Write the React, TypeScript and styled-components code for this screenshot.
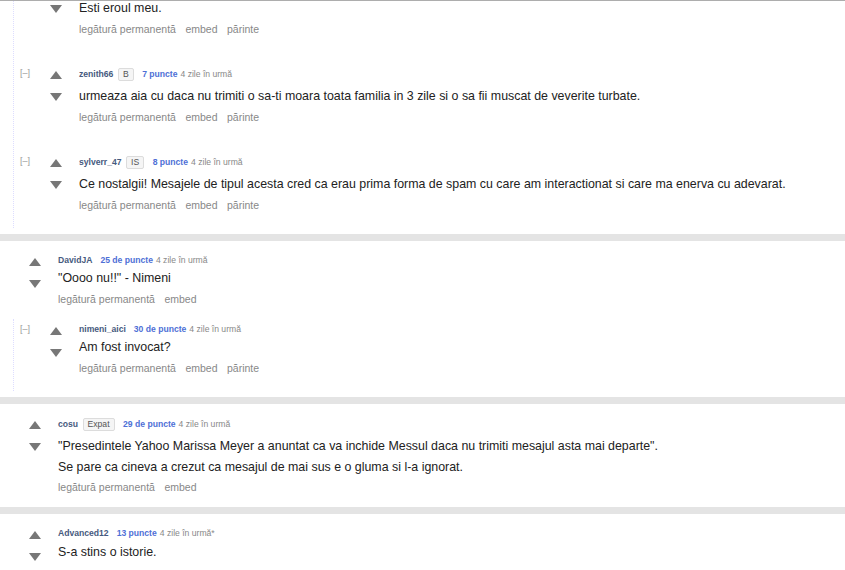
import React from 'react';
import styled, { createGlobalStyle } from 'styled-components';

const GlobalStyle = createGlobalStyle`
  html, body { margin: 0; padding: 0; background: #fff; }
  body { font-family: "Liberation Sans", Arial, sans-serif; }
`;

const Viewport = styled.div`
  width: 845px;
  height: 570px;
  overflow: hidden;
  box-sizing: border-box;
  border-top: 1px solid #adadad;
  background: #fff;
`;

const Thread = styled.div<{ $scroll: number }>`
  display: flex;
  flex-direction: column;
  gap: 7px;
  background: #e4e4e4;
  margin-top: ${(p) => -p.$scroll}px;
`;

const Block = styled.div<{ $continued?: boolean }>`
  background: #fff;
  padding: ${(p) => (p.$continued ? 0 : 14)}px 0 6px;
`;

const Row = styled.div<{ $nested?: boolean }>`
  display: flex;
  align-items: flex-start;
  padding: 0 0 7px ${(p) => (p.$nested ? 6 : 29)}px;
`;

const Collapse = styled.span`
  width: 30px;
  flex: none;
  font-size: 9px;
  line-height: 11px;
  color: #9a9a9a;
`;

const Voting = styled.div`
  width: 12px;
  flex: none;
  display: flex;
  flex-direction: column;
  gap: 14px;
  padding-top: 3px;
  margin-right: 17px;
`;

const ArrowSvg = styled.svg`
  display: block;
  width: 12px;
  height: 8px;
  fill: #777;
`;

const Entry = styled.div`
  flex: 1;
  display: flex;
  flex-direction: column;
  min-width: 0;
`;

const Tagline = styled.div<{ $flair?: boolean }>`
  display: flex;
  align-items: center;
  min-height: ${(p) => (p.$flair ? 13 : 11)}px;
  padding-bottom: ${(p) => (p.$flair ? 2.5 : 0)}px;
  font-size: 8.6px;
  line-height: 11px;
  white-space: nowrap;
`;

const Author = styled.span`
  font-weight: bold;
  color: #465a7e;
  margin-right: 5.5px;
`;

const Flair = styled.span`
  box-sizing: border-box;
  height: 13px;
  padding: 0 4px;
  border: 1px solid #dcdcdc;
  border-radius: 2px;
  background: #f5f5f5;
  color: #545454;
  line-height: 11px;
  margin: 0 6px 0 -1px;
`;

const Score = styled.span`
  font-weight: bold;
  color: #4e6fd6;
  margin-left: 2.5px;
`;

const Time = styled.span`
  color: #888;
  margin-left: 3px;
`;

const Body = styled.div`
  margin-top: 2.5px;
  font-size: 12.4px;
  line-height: 21px;
  color: #222;
`;

const Para = styled.p`
  margin: 0;
`;

const Links = styled.ul`
  display: flex;
  gap: 9.5px;
  list-style: none;
  margin: 2.5px 0 0;
  padding: 0;
  font-size: 10.5px;
  line-height: 14px;
`;

const LinkItem = styled.li`
  color: #888;
`;

const ChildList = styled.div<{ $continued?: boolean }>`
  margin: ${(p) => (p.$continued ? 0 : 6)}px 0 0 13px;
  border-left: 1px dotted #ddf;
  padding: 5px 0 9px;
  display: flex;
  flex-direction: column;
  gap: 25.5px;
`;

const Arrow = ({ down }: { down?: boolean }) => (
  <ArrowSvg viewBox="0 0 12 8" aria-hidden>
    {down ? <polygon points="0,0 12,0 6,8" /> : <polygon points="6,0 12,8 0,8" />}
  </ArrowSvg>
);

type CommentData = {
  author?: string;
  flair?: string;
  tallTagline?: boolean;
  score?: string;
  time?: string;
  body: string[];
  actions: string[];
  children?: CommentData[];
};

const WITH_PARENT = ['legătură permanentă', 'embed', 'părinte'];
const TOP = ['legătură permanentă', 'embed'];

const Comment = ({ c, nested }: { c: CommentData; nested?: boolean }) => (
  <Row $nested={nested}>
    {nested && <Collapse>{c.author ? '[–]' : ''}</Collapse>}
    <Voting>
      <Arrow />
      <Arrow down />
    </Voting>
    <Entry>
      <Tagline $flair={!!c.flair || c.tallTagline}>
        {c.author && <Author>{c.author}</Author>}
        {c.flair && <Flair>{c.flair}</Flair>}
        {c.score && <Score>{c.score}</Score>}
        {c.time && <Time>{c.time}</Time>}
      </Tagline>
      <Body>
        {c.body.map((p, i) => (
          <Para key={i}>{p}</Para>
        ))}
      </Body>
      {c.actions.length > 0 && (
        <Links>
          {c.actions.map((a) => (
            <LinkItem key={a}>{a}</LinkItem>
          ))}
        </Links>
      )}
    </Entry>
  </Row>
);

// The first reply is scrolled partly out of view; its header lies above the top edge.
const firstReplies: CommentData[] = [
  {
    tallTagline: true,
    body: ['Esti eroul meu.'],
    actions: WITH_PARENT,
  },
  {
    author: 'zenith66',
    flair: 'B',
    score: '7 puncte',
    time: '4 zile în urmă',
    body: [
      'urmeaza aia cu daca nu trimiti o sa-ti moara toata familia in 3 zile si o sa fii muscat de veverite turbate.',
    ],
    actions: WITH_PARENT,
  },
  {
    author: 'sylverr_47',
    flair: 'IS',
    score: '8 puncte',
    time: '4 zile în urmă',
    body: [
      'Ce nostalgii! Mesajele de tipul acesta cred ca erau prima forma de spam cu care am interactionat si care ma enerva cu adevarat.',
    ],
    actions: WITH_PARENT,
  },
];

const topLevel: CommentData[] = [
  {
    author: 'DavidJA',
    score: '25 de puncte',
    time: '4 zile în urmă',
    body: ['"Oooo nu!!" - Nimeni'],
    actions: TOP,
    children: [
      {
        author: 'nimeni_aici',
        score: '30 de puncte',
        time: '4 zile în urmă',
        body: ['Am fost invocat?'],
        actions: WITH_PARENT,
      },
    ],
  },
  {
    author: 'cosu',
    flair: 'Expat',
    score: '29 de puncte',
    time: '4 zile în urmă',
    body: [
      '"Presedintele Yahoo Marissa Meyer a anuntat ca va inchide Messul daca nu trimiti mesajul asta mai departe".',
      'Se pare ca cineva a crezut ca mesajul de mai sus e o gluma si l-a ignorat.',
    ],
    actions: TOP,
  },
  {
    author: 'Advanced12',
    score: '13 puncte',
    time: '4 zile în urmă*',
    body: ['S-a stins o istorie.'],
    actions: [],
  },
];

export default function App() {
  return (
    <>
      <GlobalStyle />
      <Viewport>
        <Thread $scroll={26}>
          <Block $continued>
            <ChildList $continued>
              {firstReplies.map((c, i) => (
                <Comment key={i} c={c} nested />
              ))}
            </ChildList>
          </Block>
          {topLevel.map((c, i) => (
            <Block key={i}>
              <Comment c={c} />
              {c.children && (
                <ChildList>
                  {c.children.map((k, j) => (
                    <Comment key={j} c={k} nested />
                  ))}
                </ChildList>
              )}
            </Block>
          ))}
        </Thread>
      </Viewport>
    </>
  );
}
